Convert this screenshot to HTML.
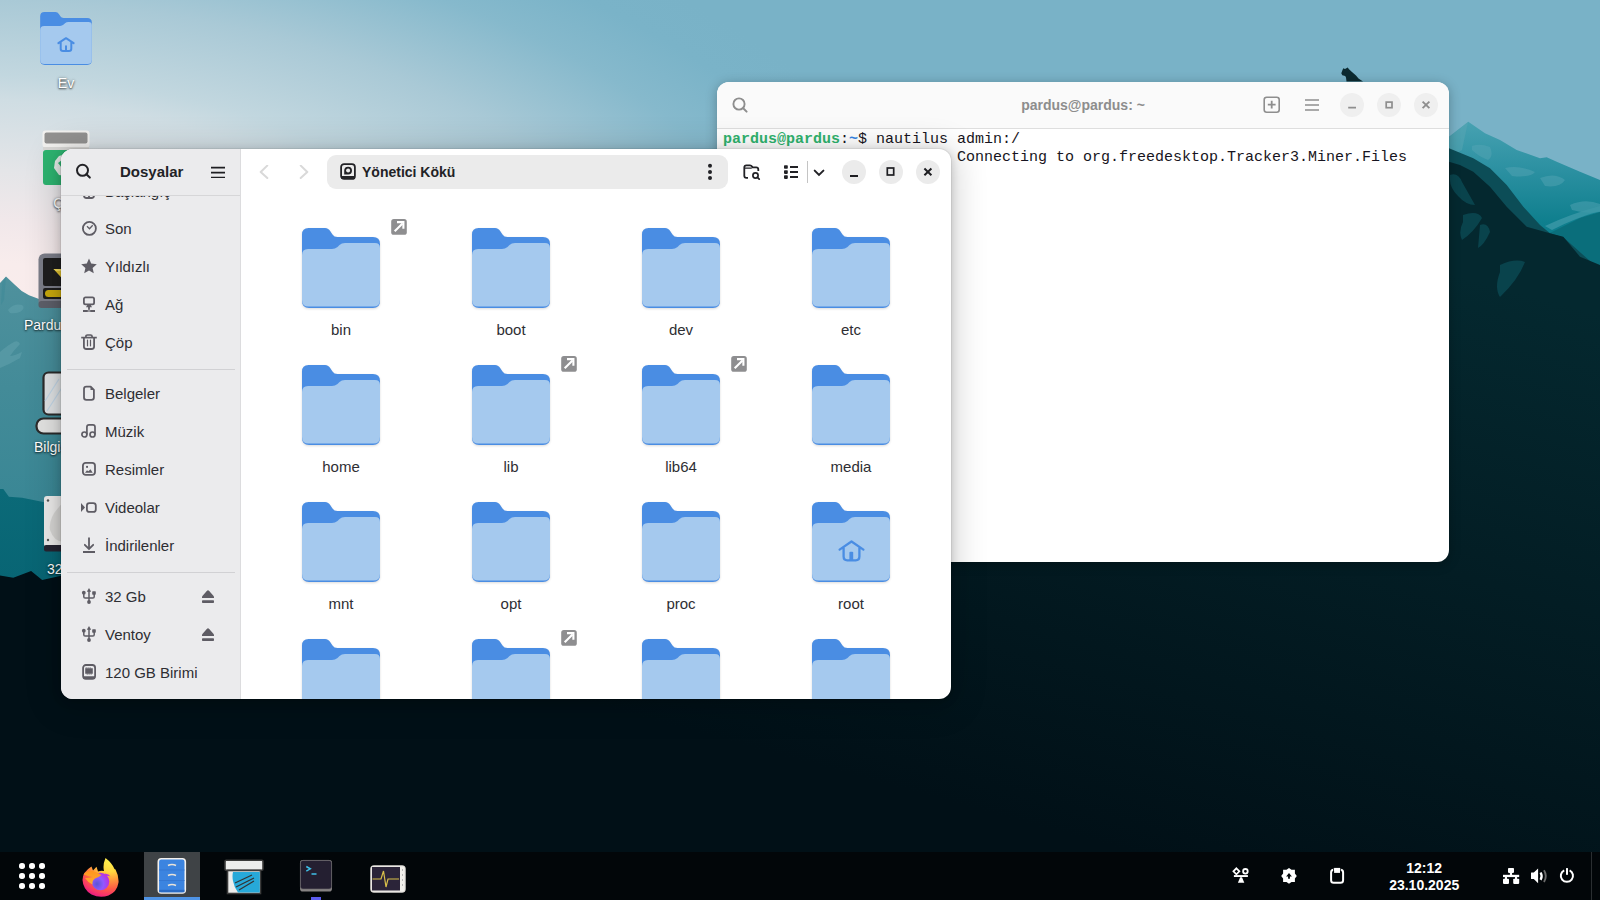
<!DOCTYPE html>
<html><head><meta charset="utf-8"><style>*{margin:0;padding:0;box-sizing:border-box}
html,body{width:1600px;height:900px;overflow:hidden;font-family:"Liberation Sans",sans-serif}
body{position:relative;background:#02121a}
.abs{position:absolute}
#wall{position:absolute;left:0;top:0;width:1600px;height:900px}
.dlbl{position:absolute;text-align:center;color:#fff;font-size:14px;line-height:18px;text-shadow:0 1px 2px rgba(0,0,0,.7),0 0 3px rgba(0,0,0,.35)}
#term{position:absolute;left:717px;top:82px;width:732px;height:480px;background:#fff;border-radius:12px;overflow:hidden;box-shadow:0 2px 12px rgba(0,0,0,.28)}
#term .hb{position:absolute;left:0;top:0;width:100%;height:47px;background:#fafafa;border-bottom:1px solid #dedede}
.ttl{left:0;top:14px;width:732px;text-align:center;font-size:14px;font-weight:bold;color:#8d8d8d;line-height:18px}
.tbtn{width:24px;height:24px;border-radius:50%;background:#efefef}
.tline{position:absolute;font-family:"Liberation Mono",monospace;font-size:15px;white-space:pre;color:#171421;line-height:18px}
.tline b{font-weight:bold}
#naut{position:absolute;left:61px;top:149px;width:890px;height:550px;background:#fff;border-radius:12px;overflow:hidden;box-shadow:0 0 0 1px rgba(0,0,0,.05),0 2px 8px 1px rgba(0,0,0,.16),0 4px 32px 6px rgba(0,0,0,.16)}
#side{position:absolute;left:0;top:0;width:180px;height:550px;background:#ebebed;border-right:1px solid #dcdcde}
#side .hb{position:absolute;left:0;top:0;width:179px;height:47px;background:#ebebed;border-bottom:1px solid #d6d6d8}
.si{position:absolute;left:44px;font-size:15px;color:#2e2e33;line-height:18px;white-space:nowrap}
.sep{position:absolute;left:6px;width:168px;height:1px;background:#d1d1d4}
.fsh{filter:drop-shadow(0 1px 1px rgba(0,0,0,.14))}
.lbl{position:absolute;width:120px;text-align:center;font-size:15px;color:#2e2e33;line-height:18px}
#bar{position:absolute;left:0;top:852px;width:1600px;height:48px;background:#020609}
.clk{color:#fff;font-size:14px;font-weight:bold;line-height:17px;text-align:center}
</style></head><body>
<svg id="wall" width="1600" height="900" viewBox="0 0 1600 900">
<defs>
<radialGradient id="sky" cx="-40" cy="344" r="1000" gradientUnits="userSpaceOnUse" gradientTransform="translate(-40 344) scale(1 0.5) translate(40 -344)">
<stop offset="0" stop-color="#fbeceb"/>
<stop offset="0.17" stop-color="#f8ecec"/>
<stop offset="0.25" stop-color="#f1e8ea"/>
<stop offset="0.35" stop-color="#e4e5e8"/>
<stop offset="0.49" stop-color="#cfdde3"/>
<stop offset="0.54" stop-color="#c2d7df"/>
<stop offset="0.69" stop-color="#a9c9d6"/>
<stop offset="0.84" stop-color="#86b9cc"/>
<stop offset="0.93" stop-color="#7ab3c8"/>
<stop offset="1" stop-color="#79b2c7"/>
</radialGradient>
<linearGradient id="dark" x1="1330" y1="240" x2="1160" y2="860" gradientUnits="userSpaceOnUse">
<stop offset="0" stop-color="#04282f"/>
<stop offset="0.45" stop-color="#031d24"/>
<stop offset="1" stop-color="#011017"/>
</linearGradient>
<linearGradient id="mtnL" x1="0" y1="275" x2="0" y2="500" gradientUnits="userSpaceOnUse">
<stop offset="0" stop-color="#4f919d"/>
<stop offset="0.5" stop-color="#438b98"/>
<stop offset="1" stop-color="#3a8795"/>
</linearGradient>
<linearGradient id="mtnL2" x1="0" y1="490" x2="0" y2="580" gradientUnits="userSpaceOnUse">
<stop offset="0" stop-color="#0b6a78"/>
<stop offset="1" stop-color="#086574"/>
</linearGradient>
<linearGradient id="mtnR" x1="0" y1="120" x2="0" y2="265" gradientUnits="userSpaceOnUse">
<stop offset="0" stop-color="#48a2b2"/>
<stop offset="0.35" stop-color="#2b90a1"/>
<stop offset="0.7" stop-color="#0f7f8e"/>
<stop offset="1" stop-color="#077685"/>
</linearGradient>
</defs>
<rect width="1600" height="900" fill="url(#sky)"/>
<!-- left mountains -->
<path d="M0 283 L6 276.5 L14.5 284.5 L21.7 291 L29 295.3 L39 299 L62 308 L200 340 L200 900 L0 900Z" fill="url(#mtnL)"/>
<path d="M2 283 L6 277 L4 300 L1 305Z" fill="#3f8a97" opacity="0.6"/><path d="M8 310 Q14 303 22 305 Q26 308 20 312 Q14 314 10 313Z M0 352 Q8 345 14 342 Q18 340 20 344 Q14 350 10 356 Q14 356 22 352 L20 358 Q10 364 0 368Z" fill="#62a2ad" opacity="0.55"/>
<path d="M0 488.9 L3.3 488.9 L8.9 496.7 L22.2 497.8 L44.4 502.2 L62 504.4 L200 520 L200 900 L0 900Z" fill="url(#mtnL2)"/>
<path d="M0 575.6 L13.3 577.8 L31.1 571.1 L42.2 580 L62 575.6 L120 590 L300 620 L300 900 L0 900Z" fill="url(#dark)"/>
<!-- right mountains -->
<path d="M1440 140 L1449 136.7 L1468.3 121.7 L1485 133.3 L1500 140 L1516.7 150 L1540 158.3 L1546.7 157.3 L1556.7 161.7 L1580 171.7 L1600 180 L1600 900 L1440 900Z" fill="url(#mtnR)"/>
<path d="M1449 137 L1468 122 L1462 150 L1449 158Z" fill="#5aa6b3" opacity="0.5"/>
<path d="M1472 146 Q1480 143 1490 147 Q1494 156 1488 160 Q1478 156 1472 150Z M1505 168 Q1520 165 1535 172 Q1530 178 1512 176Z M1540 178 Q1555 172 1565 180 Q1560 188 1545 186Z M1570 205 Q1585 198 1600 204 L1600 212 Q1585 214 1572 210Z" fill="#58a7b5" opacity="0.45"/>
<path d="M1550 233 L1580 218 L1600 212 L1600 270 L1580 256.7 L1563.3 236.7Z" fill="#0a6e7b"/>
<path d="M1545 226 Q1570 214 1600 206 L1600 211 Q1575 218 1552 230Z" fill="#3c98a8" opacity="0.8"/>
<path d="M1440 146 L1449 148.3 L1473.3 158.3 L1490 168.3 L1506.7 185 L1523.3 206.7 L1540 225 L1550 233.3 L1563 237 L1600 270 L1600 900 L1440 900Z" fill="#0c4d57"/>
<path d="M1440 160 L1449 161.7 L1460 165 L1473.3 171.7 L1490 186.7 L1506.7 206.7 L1526.7 226.7 L1550 233.3 L1563.3 236.7 L1580 256.7 L1600 265 L1600 900 L1440 900Z" fill="url(#dark)"/>
<path d="M1450 175 Q1458 172 1462 182 Q1470 196 1475 205 Q1466 205 1458 196 Q1450 188 1450 180Z M1463 215 Q1478 210 1482 218 Q1474 232 1462 240 Q1458 232 1463 222Z M1480 225 Q1488 222 1490 232 Q1484 245 1478 248Z M1500 265 Q1515 258 1525 262 Q1518 280 1500 297 Q1494 288 1500 272Z" fill="#0b4a54" opacity="0.8"/>
<!-- centre dark fill behind windows -->
<rect x="61" y="560" width="1390" height="292" fill="url(#dark)"/>
<rect x="0" y="852" width="1600" height="48" fill="#020609"/>
<path d="M1341.3 73.3 L1342.5 70 L1343.3 68.2 L1345 69 L1347.7 67.5 L1349 69.3 L1352 72 L1356 75.5 L1358.5 78.5 L1363 81.5 L1346.5 81.5 L1346 77.5 L1345.2 76 L1342.3 75.3Z" fill="#0c2a30"/>
</svg>
<svg class="abs" style="left:40px;top:12px" width="52" height="53" viewBox="0 0 78 80"><path d="M0 6.5 Q0 0 6.5 0 L23 0 Q26.5 0 28.5 3.5 L30.5 6.5 Q32 9 35.5 9 L71 9 Q78 9 78 16 L78 73 Q78 80 71 80 L7 80 Q0 80 0 73Z" fill="#4a8de3"/>
<path d="M0 27 Q0 21 6 21 L30 21 Q33 21 35.5 19 L37.5 17 Q39.5 15 43 15 L73 15 Q78 15 78 20 L78 72 Q78 78.6 71.5 78.6 L6.5 78.6 Q0 78.6 0 72Z" fill="#a5c9ee"/><path d="M27.5 47 L39 39.5 L50.5 47 M31 45.5 L31 55.5 Q31 59 34.5 59 L43.5 59 Q47 59 47 55.5 L47 45.5 M39 59 L39 51.5" stroke="#4a8de3" stroke-width="3" fill="none" stroke-linecap="round" stroke-linejoin="round"/></svg><div class="dlbl" style="left:36px;top:74px;width:60px">Ev</div><svg class="abs" style="left:42px;top:130px" width="48" height="56" viewBox="0 0 48 56">
<rect x="1" y="20" width="46" height="35" rx="3" fill="#2db470"/>
<rect x="0.5" y="0.5" width="47" height="17" rx="3" fill="#f2f1ef"/>
<rect x="2.5" y="2.5" width="43" height="11" rx="2" fill="#929190"/>
<rect x="1" y="17" width="46" height="3" fill="#d9d8d6"/>
<path d="M13 31 L17 26 L24 24 L24 46 L17 45 L12 38Z" fill="#e6ece8"/><path d="M16 33 L20 30 L20 38Z" fill="#2db470"/>
</svg><div class="dlbl" style="left:36px;top:194px;width:60px">Çöp</div><svg class="abs" style="left:38px;top:253px" width="30" height="56" viewBox="0 0 30 56">
<rect x="0.5" y="0.5" width="50" height="54" rx="6" fill="#7b7d88"/>
<rect x="0.5" y="48" width="50" height="7" rx="3" fill="#5d5f69"/>
<rect x="5" y="5" width="45" height="28" rx="2" fill="#1e1e1e"/>
<rect x="5" y="35" width="45" height="11" rx="2" fill="#1e1e1e"/>
<rect x="7" y="37" width="40" height="7" rx="3.5" fill="#c9a90c"/>
<path d="M15.5 16 L30 16 L30 32 Z" fill="#e3c430"/><path d="M15.5 16 L30 16 L30 18 L18 18Z" fill="#f3dc60"/>
</svg><div class="dlbl" style="left:14px;top:316px;width:80px;text-align:left;padding-left:10px">Pardus</div><svg class="abs" style="left:35px;top:371px" width="30" height="64" viewBox="0 0 30 64">
<rect x="8.5" y="1.5" width="40" height="42" rx="5" fill="#dfe2e4" stroke="#2b2b2b" stroke-width="2.2"/>
<path d="M10 30 L24 8 M12 40 L30 12" stroke="#c2d6e6" stroke-width="1.2"/>
<rect x="1.5" y="47.5" width="50" height="15" rx="7" fill="#e3e3e2" stroke="#2b2b2b" stroke-width="2.2"/>
</svg><div class="dlbl" style="left:24px;top:438px;width:80px;text-align:left;padding-left:10px">Bilgisayar</div><svg class="abs" style="left:44px;top:496px" width="20" height="56" viewBox="0 0 20 56">
<rect x="0" y="0" width="40" height="51" rx="3" fill="#ecebea"/>
<rect x="0" y="49" width="40" height="6.5" rx="2" fill="#272431"/>
<path d="M20 6 Q4 20 6 34 Q10 46 20 46Z" fill="#d7d6d4"/>
<circle cx="4" cy="4.5" r="1.2" fill="#555"/><circle cx="4" cy="44" r="1.2" fill="#555"/>
</svg><div class="dlbl" style="left:37px;top:560px;width:60px;text-align:left;padding-left:10px">32 Gb</div>
<div id="term">
 <div class="hb"></div>
 <svg class="abs" style="left:15px;top:15px" width="18" height="18" viewBox="0 0 18 18"><circle cx="7" cy="7" r="5.6" stroke="#8e8e8e" stroke-width="1.9" fill="none"/><path d="M11.2 11.2 L14.6 14.6" stroke="#8e8e8e" stroke-width="2" stroke-linecap="round"/></svg>
 <div class="abs ttl">pardus@pardus: ~</div>
 <svg class="abs" style="left:546px;top:14px" width="18" height="18" viewBox="0 0 18 18"><rect x="1.2" y="1.2" width="15" height="15" rx="2.5" stroke="#8e8e8e" stroke-width="1.6" fill="none"/><path d="M8.7 4.8 V12.6 M4.8 8.7 H12.6" stroke="#8e8e8e" stroke-width="1.8"/></svg>
 <svg class="abs" style="left:588px;top:17px" width="14" height="12" viewBox="0 0 14 12"><path d="M0 1 H14 M0 6 H14 M0 11 H14" stroke="#8e8e8e" stroke-width="1.5"/></svg>
 <div class="abs tbtn" style="left:623px;top:11px"></div>
 <div class="abs tbtn" style="left:660px;top:11px"></div>
 <div class="abs tbtn" style="left:697px;top:11px"></div>
 <svg class="abs" style="left:0;top:0" width="732" height="46" viewBox="0 0 732 46"><path d="M631.2 25.6 H639" stroke="#8e8e8e" stroke-width="1.8"/><rect x="669.2" y="20.1" width="5.8" height="5.6" stroke="#8e8e8e" stroke-width="1.7" fill="none"/><path d="M705.6 19.6 L712.4 26.1 M712.4 19.6 L705.6 26.1" stroke="#8e8e8e" stroke-width="1.9"/></svg>
 <div class="tline" style="left:6px;top:48.5px"><b style="color:#2fb36e">pardus@pardus</b>:<b style="color:#3584e4">~</b>$ nautilus admin:/</div>
 <div class="tline" style="left:6px;top:66.5px">                          Connecting to org.freedesktop.Tracker3.Miner.Files</div>
</div>
<div id="naut"><svg class="abs fsh" style="left:241px;top:79px" width="78" height="80" viewBox="0 0 78 80"><path d="M0 6.5 Q0 0 6.5 0 L23 0 Q26.5 0 28.5 3.5 L30.5 6.5 Q32 9 35.5 9 L71 9 Q78 9 78 16 L78 73 Q78 80 71 80 L7 80 Q0 80 0 73Z" fill="#4a8de3"/>
<path d="M0 27 Q0 21 6 21 L30 21 Q33 21 35.5 19 L37.5 17 Q39.5 15 43 15 L73 15 Q78 15 78 20 L78 72 Q78 78.6 71.5 78.6 L6.5 78.6 Q0 78.6 0 72Z" fill="#a5c9ee"/></svg><div class="lbl" style="left:220px;top:171.6px">bin</div><svg class="abs" style="left:330px;top:70px" width="16" height="16" viewBox="0 0 16 16"><rect x="0.2" y="0.1" width="15.6" height="15.7" rx="2.6" fill="#8e8e90"/><path d="M3.7 12.3 L11.5 4.5" stroke="#fff" stroke-width="2.1"/><path d="M6 3.1 H12.4 V9.7" stroke="#fff" stroke-width="2.1" fill="none"/></svg><svg class="abs fsh" style="left:411px;top:79px" width="78" height="80" viewBox="0 0 78 80"><path d="M0 6.5 Q0 0 6.5 0 L23 0 Q26.5 0 28.5 3.5 L30.5 6.5 Q32 9 35.5 9 L71 9 Q78 9 78 16 L78 73 Q78 80 71 80 L7 80 Q0 80 0 73Z" fill="#4a8de3"/>
<path d="M0 27 Q0 21 6 21 L30 21 Q33 21 35.5 19 L37.5 17 Q39.5 15 43 15 L73 15 Q78 15 78 20 L78 72 Q78 78.6 71.5 78.6 L6.5 78.6 Q0 78.6 0 72Z" fill="#a5c9ee"/></svg><div class="lbl" style="left:390px;top:171.6px">boot</div><svg class="abs fsh" style="left:581px;top:79px" width="78" height="80" viewBox="0 0 78 80"><path d="M0 6.5 Q0 0 6.5 0 L23 0 Q26.5 0 28.5 3.5 L30.5 6.5 Q32 9 35.5 9 L71 9 Q78 9 78 16 L78 73 Q78 80 71 80 L7 80 Q0 80 0 73Z" fill="#4a8de3"/>
<path d="M0 27 Q0 21 6 21 L30 21 Q33 21 35.5 19 L37.5 17 Q39.5 15 43 15 L73 15 Q78 15 78 20 L78 72 Q78 78.6 71.5 78.6 L6.5 78.6 Q0 78.6 0 72Z" fill="#a5c9ee"/></svg><div class="lbl" style="left:560px;top:171.6px">dev</div><svg class="abs fsh" style="left:751px;top:79px" width="78" height="80" viewBox="0 0 78 80"><path d="M0 6.5 Q0 0 6.5 0 L23 0 Q26.5 0 28.5 3.5 L30.5 6.5 Q32 9 35.5 9 L71 9 Q78 9 78 16 L78 73 Q78 80 71 80 L7 80 Q0 80 0 73Z" fill="#4a8de3"/>
<path d="M0 27 Q0 21 6 21 L30 21 Q33 21 35.5 19 L37.5 17 Q39.5 15 43 15 L73 15 Q78 15 78 20 L78 72 Q78 78.6 71.5 78.6 L6.5 78.6 Q0 78.6 0 72Z" fill="#a5c9ee"/></svg><div class="lbl" style="left:730px;top:171.6px">etc</div><svg class="abs fsh" style="left:241px;top:216px" width="78" height="80" viewBox="0 0 78 80"><path d="M0 6.5 Q0 0 6.5 0 L23 0 Q26.5 0 28.5 3.5 L30.5 6.5 Q32 9 35.5 9 L71 9 Q78 9 78 16 L78 73 Q78 80 71 80 L7 80 Q0 80 0 73Z" fill="#4a8de3"/>
<path d="M0 27 Q0 21 6 21 L30 21 Q33 21 35.5 19 L37.5 17 Q39.5 15 43 15 L73 15 Q78 15 78 20 L78 72 Q78 78.6 71.5 78.6 L6.5 78.6 Q0 78.6 0 72Z" fill="#a5c9ee"/></svg><div class="lbl" style="left:220px;top:308.6px">home</div><svg class="abs fsh" style="left:411px;top:216px" width="78" height="80" viewBox="0 0 78 80"><path d="M0 6.5 Q0 0 6.5 0 L23 0 Q26.5 0 28.5 3.5 L30.5 6.5 Q32 9 35.5 9 L71 9 Q78 9 78 16 L78 73 Q78 80 71 80 L7 80 Q0 80 0 73Z" fill="#4a8de3"/>
<path d="M0 27 Q0 21 6 21 L30 21 Q33 21 35.5 19 L37.5 17 Q39.5 15 43 15 L73 15 Q78 15 78 20 L78 72 Q78 78.6 71.5 78.6 L6.5 78.6 Q0 78.6 0 72Z" fill="#a5c9ee"/></svg><div class="lbl" style="left:390px;top:308.6px">lib</div><svg class="abs" style="left:500px;top:207px" width="16" height="16" viewBox="0 0 16 16"><rect x="0.2" y="0.1" width="15.6" height="15.7" rx="2.6" fill="#8e8e90"/><path d="M3.7 12.3 L11.5 4.5" stroke="#fff" stroke-width="2.1"/><path d="M6 3.1 H12.4 V9.7" stroke="#fff" stroke-width="2.1" fill="none"/></svg><svg class="abs fsh" style="left:581px;top:216px" width="78" height="80" viewBox="0 0 78 80"><path d="M0 6.5 Q0 0 6.5 0 L23 0 Q26.5 0 28.5 3.5 L30.5 6.5 Q32 9 35.5 9 L71 9 Q78 9 78 16 L78 73 Q78 80 71 80 L7 80 Q0 80 0 73Z" fill="#4a8de3"/>
<path d="M0 27 Q0 21 6 21 L30 21 Q33 21 35.5 19 L37.5 17 Q39.5 15 43 15 L73 15 Q78 15 78 20 L78 72 Q78 78.6 71.5 78.6 L6.5 78.6 Q0 78.6 0 72Z" fill="#a5c9ee"/></svg><div class="lbl" style="left:560px;top:308.6px">lib64</div><svg class="abs" style="left:670px;top:207px" width="16" height="16" viewBox="0 0 16 16"><rect x="0.2" y="0.1" width="15.6" height="15.7" rx="2.6" fill="#8e8e90"/><path d="M3.7 12.3 L11.5 4.5" stroke="#fff" stroke-width="2.1"/><path d="M6 3.1 H12.4 V9.7" stroke="#fff" stroke-width="2.1" fill="none"/></svg><svg class="abs fsh" style="left:751px;top:216px" width="78" height="80" viewBox="0 0 78 80"><path d="M0 6.5 Q0 0 6.5 0 L23 0 Q26.5 0 28.5 3.5 L30.5 6.5 Q32 9 35.5 9 L71 9 Q78 9 78 16 L78 73 Q78 80 71 80 L7 80 Q0 80 0 73Z" fill="#4a8de3"/>
<path d="M0 27 Q0 21 6 21 L30 21 Q33 21 35.5 19 L37.5 17 Q39.5 15 43 15 L73 15 Q78 15 78 20 L78 72 Q78 78.6 71.5 78.6 L6.5 78.6 Q0 78.6 0 72Z" fill="#a5c9ee"/></svg><div class="lbl" style="left:730px;top:308.6px">media</div><svg class="abs fsh" style="left:241px;top:353px" width="78" height="80" viewBox="0 0 78 80"><path d="M0 6.5 Q0 0 6.5 0 L23 0 Q26.5 0 28.5 3.5 L30.5 6.5 Q32 9 35.5 9 L71 9 Q78 9 78 16 L78 73 Q78 80 71 80 L7 80 Q0 80 0 73Z" fill="#4a8de3"/>
<path d="M0 27 Q0 21 6 21 L30 21 Q33 21 35.5 19 L37.5 17 Q39.5 15 43 15 L73 15 Q78 15 78 20 L78 72 Q78 78.6 71.5 78.6 L6.5 78.6 Q0 78.6 0 72Z" fill="#a5c9ee"/></svg><div class="lbl" style="left:220px;top:445.6px">mnt</div><svg class="abs fsh" style="left:411px;top:353px" width="78" height="80" viewBox="0 0 78 80"><path d="M0 6.5 Q0 0 6.5 0 L23 0 Q26.5 0 28.5 3.5 L30.5 6.5 Q32 9 35.5 9 L71 9 Q78 9 78 16 L78 73 Q78 80 71 80 L7 80 Q0 80 0 73Z" fill="#4a8de3"/>
<path d="M0 27 Q0 21 6 21 L30 21 Q33 21 35.5 19 L37.5 17 Q39.5 15 43 15 L73 15 Q78 15 78 20 L78 72 Q78 78.6 71.5 78.6 L6.5 78.6 Q0 78.6 0 72Z" fill="#a5c9ee"/></svg><div class="lbl" style="left:390px;top:445.6px">opt</div><svg class="abs fsh" style="left:581px;top:353px" width="78" height="80" viewBox="0 0 78 80"><path d="M0 6.5 Q0 0 6.5 0 L23 0 Q26.5 0 28.5 3.5 L30.5 6.5 Q32 9 35.5 9 L71 9 Q78 9 78 16 L78 73 Q78 80 71 80 L7 80 Q0 80 0 73Z" fill="#4a8de3"/>
<path d="M0 27 Q0 21 6 21 L30 21 Q33 21 35.5 19 L37.5 17 Q39.5 15 43 15 L73 15 Q78 15 78 20 L78 72 Q78 78.6 71.5 78.6 L6.5 78.6 Q0 78.6 0 72Z" fill="#a5c9ee"/></svg><div class="lbl" style="left:560px;top:445.6px">proc</div><svg class="abs fsh" style="left:751px;top:353px" width="78" height="80" viewBox="0 0 78 80"><path d="M0 6.5 Q0 0 6.5 0 L23 0 Q26.5 0 28.5 3.5 L30.5 6.5 Q32 9 35.5 9 L71 9 Q78 9 78 16 L78 73 Q78 80 71 80 L7 80 Q0 80 0 73Z" fill="#4a8de3"/>
<path d="M0 27 Q0 21 6 21 L30 21 Q33 21 35.5 19 L37.5 17 Q39.5 15 43 15 L73 15 Q78 15 78 20 L78 72 Q78 78.6 71.5 78.6 L6.5 78.6 Q0 78.6 0 72Z" fill="#a5c9ee"/><path d="M27.6 47.6 L39.5 39.5 L51.4 47.6 M31.6 46 V54.6 Q31.6 58.3 35.3 58.3 H43.7 Q47.4 58.3 47.4 54.6 V46" stroke="#4a8de3" stroke-width="2.3" fill="none" stroke-linecap="round" stroke-linejoin="round"/><rect x="37.4" y="49.8" width="3.8" height="9" rx="1" fill="#4a8de3"/></svg><div class="lbl" style="left:730px;top:445.6px">root</div><svg class="abs fsh" style="left:241px;top:490px" width="78" height="80" viewBox="0 0 78 80"><path d="M0 6.5 Q0 0 6.5 0 L23 0 Q26.5 0 28.5 3.5 L30.5 6.5 Q32 9 35.5 9 L71 9 Q78 9 78 16 L78 73 Q78 80 71 80 L7 80 Q0 80 0 73Z" fill="#4a8de3"/>
<path d="M0 27 Q0 21 6 21 L30 21 Q33 21 35.5 19 L37.5 17 Q39.5 15 43 15 L73 15 Q78 15 78 20 L78 72 Q78 78.6 71.5 78.6 L6.5 78.6 Q0 78.6 0 72Z" fill="#a5c9ee"/></svg><svg class="abs fsh" style="left:411px;top:490px" width="78" height="80" viewBox="0 0 78 80"><path d="M0 6.5 Q0 0 6.5 0 L23 0 Q26.5 0 28.5 3.5 L30.5 6.5 Q32 9 35.5 9 L71 9 Q78 9 78 16 L78 73 Q78 80 71 80 L7 80 Q0 80 0 73Z" fill="#4a8de3"/>
<path d="M0 27 Q0 21 6 21 L30 21 Q33 21 35.5 19 L37.5 17 Q39.5 15 43 15 L73 15 Q78 15 78 20 L78 72 Q78 78.6 71.5 78.6 L6.5 78.6 Q0 78.6 0 72Z" fill="#a5c9ee"/></svg><svg class="abs" style="left:500px;top:481px" width="16" height="16" viewBox="0 0 16 16"><rect x="0.2" y="0.1" width="15.6" height="15.7" rx="2.6" fill="#8e8e90"/><path d="M3.7 12.3 L11.5 4.5" stroke="#fff" stroke-width="2.1"/><path d="M6 3.1 H12.4 V9.7" stroke="#fff" stroke-width="2.1" fill="none"/></svg><svg class="abs fsh" style="left:581px;top:490px" width="78" height="80" viewBox="0 0 78 80"><path d="M0 6.5 Q0 0 6.5 0 L23 0 Q26.5 0 28.5 3.5 L30.5 6.5 Q32 9 35.5 9 L71 9 Q78 9 78 16 L78 73 Q78 80 71 80 L7 80 Q0 80 0 73Z" fill="#4a8de3"/>
<path d="M0 27 Q0 21 6 21 L30 21 Q33 21 35.5 19 L37.5 17 Q39.5 15 43 15 L73 15 Q78 15 78 20 L78 72 Q78 78.6 71.5 78.6 L6.5 78.6 Q0 78.6 0 72Z" fill="#a5c9ee"/></svg><svg class="abs fsh" style="left:751px;top:490px" width="78" height="80" viewBox="0 0 78 80"><path d="M0 6.5 Q0 0 6.5 0 L23 0 Q26.5 0 28.5 3.5 L30.5 6.5 Q32 9 35.5 9 L71 9 Q78 9 78 16 L78 73 Q78 80 71 80 L7 80 Q0 80 0 73Z" fill="#4a8de3"/>
<path d="M0 27 Q0 21 6 21 L30 21 Q33 21 35.5 19 L37.5 17 Q39.5 15 43 15 L73 15 Q78 15 78 20 L78 72 Q78 78.6 71.5 78.6 L6.5 78.6 Q0 78.6 0 72Z" fill="#a5c9ee"/></svg><svg class="abs" style="left:198px;top:16px" width="10" height="14" viewBox="0 0 10 14"><path d="M8.3 0.6 L1.7 7 L8.3 13.1" stroke="#d9d9d9" stroke-width="2" fill="none" stroke-linecap="round" stroke-linejoin="round"/></svg><svg class="abs" style="left:238px;top:16px" width="10" height="14" viewBox="0 0 10 14"><path d="M1.7 0.6 L8.3 7 L1.7 13.1" stroke="#d9d9d9" stroke-width="2" fill="none" stroke-linecap="round" stroke-linejoin="round"/></svg><div class="abs" style="left:266px;top:6px;width:401px;height:34px;border-radius:9px;background:#ebebeb"></div><svg class="abs" style="left:279px;top:14px" width="16" height="18" viewBox="0 0 16 18"><rect x="1.1" y="1.1" width="13.8" height="14.8" rx="3" stroke="#222226" stroke-width="1.8" fill="none"/><rect x="1.1" y="13" width="13.8" height="2.9" rx="1.2" fill="#222226"/><path d="M8.1 3.7 A3.9 3.9 0 1 1 8.1 11.5 H4.2 V7.6 A3.9 3.9 0 0 1 8.1 3.7Z" fill="#222226"/><circle cx="8.1" cy="7.6" r="2" fill="#ebebeb"/></svg><div class="abs" style="left:301px;top:13.5px;font-size:14px;font-weight:bold;color:#222226;line-height:18px">Yönetici Kökü</div><svg class="abs" style="left:646px;top:14px;height:18px" width="6" height="16" viewBox="0 0 6 18"><circle cx="3" cy="2.8" r="2" fill="#222226"/><circle cx="3" cy="8.9" r="2" fill="#222226"/><circle cx="3" cy="15" r="2" fill="#222226"/></svg><svg class="abs" style="left:682px;top:15px" width="18" height="17" viewBox="0 0 18 17"><path d="M5 13.8 H3.4 Q1.3 13.8 1.3 11.7 V3.5 Q1.3 1.3 3.4 1.3 H7 Q8.3 1.3 9 2.4 L9.6 3.3 H13.2 Q15.3 3.3 15.3 5.4 V7" stroke="#222226" stroke-width="1.8" fill="none"/><path d="M1.3 4.1 H8.8" stroke="#222226" stroke-width="1.2"/><circle cx="12.5" cy="11.5" r="2.6" stroke="#222226" stroke-width="1.7" fill="none"/><path d="M14.4 13.4 L16.2 15.1" stroke="#222226" stroke-width="1.8" stroke-linecap="round"/></svg><svg class="abs" style="left:722px;top:15px" width="16" height="15" viewBox="0 0 16 15"><rect x="1" y="1.2" width="3.8" height="3.6" rx="0.8" fill="#222226"/><rect x="1" y="6.3" width="3.8" height="3.6" rx="0.8" fill="#222226"/><rect x="1" y="11.3" width="3.8" height="3.6" rx="0.8" fill="#222226"/><path d="M7 3 H15 M7 8 H15 M7 13 H15" stroke="#222226" stroke-width="1.8"/></svg><div class="abs" style="left:746px;top:12px;width:1px;height:22px;background:#c4c4c4"></div><svg class="abs" style="left:752px;top:20px" width="12" height="8" viewBox="0 0 12 8"><path d="M1.7 1.6 L6 5.9 L10.4 1.6" stroke="#222226" stroke-width="2" fill="none" stroke-linecap="round"/></svg><div class="abs" style="left:781px;top:11px;width:24px;height:24px;border-radius:50%;background:#ebebeb"></div><div class="abs" style="left:818px;top:11px;width:24px;height:24px;border-radius:50%;background:#ebebeb"></div><div class="abs" style="left:855px;top:11px;width:24px;height:24px;border-radius:50%;background:#ebebeb"></div><svg class="abs" style="left:781px;top:11px" width="100" height="24" viewBox="0 0 100 24"><path d="M8 25.5 H16" stroke="#1e1e22" stroke-width="2" transform="translate(0 -9.5)"/><rect x="45.3" y="8" width="6.4" height="7" stroke="#1e1e22" stroke-width="1.7" fill="none"/><path d="M82.4 8.5 L89.4 15.2 M89.4 8.5 L82.4 15.2" stroke="#1e1e22" stroke-width="2"/></svg><div id="side"><div class="si" style="top:34.2px">Başlangıç</div><svg class="abs" style="left:20px;top:34.4px" width="16" height="16" viewBox="0 0 16 16"><path d="M1 7 L8 1.5 L15 7 M3 6 V12.5 Q3 15 5.5 15 H10.5 Q13 15 13 12.5 V6 M8 15 V10.5" stroke="#5e5c64" stroke-width="1.8" fill="none" stroke-linejoin="round"/></svg><div class="si" style="top:71.0px">Son</div><svg class="abs" style="left:20px;top:71.2px" width="16" height="16" viewBox="0 0 16 16"><circle cx="8.4" cy="8.4" r="6.5" stroke="#5e5c64" stroke-width="1.8" fill="none"/><path d="M6 6.3 L8.5 8.7 L11.7 5.2" stroke="#5e5c64" stroke-width="1.3" fill="none"/></svg><div class="si" style="top:109.0px">Yıldızlı</div><svg class="abs" style="left:20px;top:109.2px" width="16" height="16" viewBox="0 0 16 16"><path d="M8 0.6 L10.2 5.6 L15.8 6.2 L11.6 9.9 L12.8 15.3 L8 12.6 L3.2 15.3 L4.4 9.9 L0.2 6.2 L5.8 5.6Z" fill="#5e5c64"/></svg><div class="si" style="top:147.0px">Ağ</div><svg class="abs" style="left:20px;top:147.2px" width="16" height="16" viewBox="0 0 16 16"><rect x="2.9" y="1.4" width="10.2" height="6.9" rx="1.6" stroke="#5e5c64" stroke-width="1.8" fill="none"/><path d="M5 11.2 L6.2 9 H9.8 L11 11.2Z" fill="#5e5c64"/><path d="M8 10 V13.3 M2 15 H6.6 M9.4 15 H14" stroke="#5e5c64" stroke-width="1.8"/><circle cx="8" cy="15" r="1.3" stroke="#5e5c64" stroke-width="1" fill="none"/></svg><div class="si" style="top:185.0px">Çöp</div><svg class="abs" style="left:20px;top:185.2px" width="16" height="16" viewBox="0 0 16 16"><path d="M0.2 3.6 H15.8" stroke="#5e5c64" stroke-width="1.7"/><path d="M4.9 3.4 V2.6 Q4.9 1 6.5 1 H9.5 Q11.1 1 11.1 2.6 V3.4" stroke="#5e5c64" stroke-width="1.7" fill="none"/><path d="M2.9 3.6 V12.5 Q2.9 15 5.4 15 H10.6 Q13.1 15 13.1 12.5 V3.6" stroke="#5e5c64" stroke-width="1.8" fill="none"/><path d="M6.5 6.2 V11.8 M9.5 6.2 V11.8" stroke="#5e5c64" stroke-width="1.2" stroke-linecap="round"/></svg><div class="si" style="top:236.0px">Belgeler</div><svg class="abs" style="left:20px;top:236.2px" width="16" height="16" viewBox="0 0 16 16"><path d="M5.3 1.6 H9.7 L12.9 4.8 V12.6 Q12.9 14.9 10.6 14.9 H5.3 Q3 14.9 3 12.6 V3.9 Q3 1.6 5.3 1.6Z" stroke="#5e5c64" stroke-width="1.8" fill="none" stroke-linejoin="round"/><path d="M9.5 1.8 V4.9 H12.7Z" fill="#5e5c64"/></svg><div class="si" style="top:274.0px">Müzik</div><svg class="abs" style="left:20px;top:274.2px" width="16" height="16" viewBox="0 0 16 16"><circle cx="3.4" cy="11.5" r="2.5" stroke="#5e5c64" stroke-width="1.7" fill="none"/><circle cx="11.5" cy="11.5" r="2.5" stroke="#5e5c64" stroke-width="1.7" fill="none"/><path d="M5.9 11.5 V4 Q5.9 1.8 8 1.8 H11.9 Q14 1.8 14 4 V11.5" stroke="#5e5c64" stroke-width="1.7" fill="none"/></svg><div class="si" style="top:312.0px">Resimler</div><svg class="abs" style="left:20px;top:312.2px" width="16" height="16" viewBox="0 0 16 16"><rect x="1.9" y="1.9" width="12.1" height="12" rx="2.8" stroke="#5e5c64" stroke-width="1.8" fill="none"/><rect x="5.1" y="4.9" width="1.9" height="1.9" fill="#5e5c64"/><path d="M4 11.8 L6 9.2 L7.3 10.2 L9.5 8.2 L11.7 11.8Z" fill="#5e5c64"/></svg><div class="si" style="top:350.0px">Videolar</div><svg class="abs" style="left:20px;top:350.2px" width="16" height="16" viewBox="0 0 16 16"><path d="M0 4 L4 8.5 L0 13Z" fill="#5e5c64"/><rect x="5.9" y="4.1" width="8.9" height="8.8" rx="2.5" stroke="#5e5c64" stroke-width="1.8" fill="none"/></svg><div class="si" style="top:388.0px">İndirilenler</div><svg class="abs" style="left:20px;top:388.2px" width="16" height="16" viewBox="0 0 16 16"><path d="M8 0.5 V12" stroke="#5e5c64" stroke-width="1.8"/><path d="M3.8 7.8 L8 12 L12.2 7.8" stroke="#5e5c64" stroke-width="1.8" fill="none" stroke-linecap="round"/><path d="M2 15 H14" stroke="#5e5c64" stroke-width="1.8"/></svg><div class="si" style="top:439.0px">32 Gb</div><svg class="abs" style="left:20px;top:439.2px" width="16" height="16" viewBox="0 0 16 16"><path d="M8 3 V13" stroke="#5e5c64" stroke-width="1.5"/><path d="M8 0 L10.2 3.8 H5.8Z" fill="#5e5c64"/><circle cx="8" cy="14" r="1.9" fill="#5e5c64"/><path d="M2.8 5 V8.7 Q2.8 10 4.1 10 H11.9 Q13.2 10 13.2 8.7 V6" stroke="#5e5c64" stroke-width="1.5" fill="none"/><circle cx="2.8" cy="4.7" r="1.9" fill="#5e5c64"/><rect x="11.2" y="3.3" width="3.6" height="3.4" rx="0.6" fill="#5e5c64"/></svg><div class="si" style="top:477.0px">Ventoy</div><svg class="abs" style="left:20px;top:477.2px" width="16" height="16" viewBox="0 0 16 16"><path d="M8 3 V13" stroke="#5e5c64" stroke-width="1.5"/><path d="M8 0 L10.2 3.8 H5.8Z" fill="#5e5c64"/><circle cx="8" cy="14" r="1.9" fill="#5e5c64"/><path d="M2.8 5 V8.7 Q2.8 10 4.1 10 H11.9 Q13.2 10 13.2 8.7 V6" stroke="#5e5c64" stroke-width="1.5" fill="none"/><circle cx="2.8" cy="4.7" r="1.9" fill="#5e5c64"/><rect x="11.2" y="3.3" width="3.6" height="3.4" rx="0.6" fill="#5e5c64"/></svg><div class="si" style="top:515.0px">120 GB Birimi</div><svg class="abs" style="left:20px;top:515.2px" width="16" height="16" viewBox="0 0 16 16"><rect x="2.1" y="1" width="12" height="13.8" rx="2.8" stroke="#5e5c64" stroke-width="1.8" fill="none"/><rect x="2.1" y="12.3" width="12" height="2.6" rx="1" fill="#5e5c64"/><path d="M4.2 4.3 H11.8 V9.7 H4.2Z" fill="#5e5c64"/><path d="M5.2 3.3 V4.5 M7.1 3.3 V4.5 M9.1 3.3 V4.5 M6.2 9.5 V10.7 M8.1 9.5 V10.7 M10.1 9.5 V10.7" stroke="#5e5c64" stroke-width="0.9"/></svg><svg class="abs" style="left:140px;top:440.8px" width="14" height="14" viewBox="0 0 14 14"><path d="M7 0.3 Q7.6 0.3 8 0.8 L12.4 5.8 Q13 6.6 13 7.3 V8 H1 V7.3 Q1 6.6 1.6 5.8 L6 0.8 Q6.4 0.3 7 0.3Z" fill="#5e5c64"/><rect x="1" y="10.2" width="12" height="2.8" rx="0.8" fill="#5e5c64"/></svg><svg class="abs" style="left:140px;top:478.8px" width="14" height="14" viewBox="0 0 14 14"><path d="M7 0.3 Q7.6 0.3 8 0.8 L12.4 5.8 Q13 6.6 13 7.3 V8 H1 V7.3 Q1 6.6 1.6 5.8 L6 0.8 Q6.4 0.3 7 0.3Z" fill="#5e5c64"/><rect x="1" y="10.2" width="12" height="2.8" rx="0.8" fill="#5e5c64"/></svg><div class="sep" style="top:220px"></div><div class="sep" style="top:423px"></div><div class="hb"><svg class="abs" style="left:14px;top:14px" width="18" height="18" viewBox="0 0 18 18"><circle cx="7.5" cy="7.3" r="5.5" stroke="#222226" stroke-width="2" fill="none"/><path d="M11.4 11.3 L14.8 14.6" stroke="#222226" stroke-width="2.1" stroke-linecap="round"/></svg><div class="abs" style="left:59px;top:14.2px;font-size:15px;font-weight:bold;color:#222226;line-height:18px">Dosyalar</div><svg class="abs" style="left:150px;top:17px" width="14" height="12" viewBox="0 0 14 12"><path d="M0 1.6 H14 M0 6.6 H14 M0 11.6 H14" stroke="#1e1e22" stroke-width="1.8"/></svg></div></div></div>
<div id="bar"><div class="abs" style="left:19.3px;top:11.3px;width:5.4px;height:5.4px;border-radius:50%;background:#fff"></div><div class="abs" style="left:19.3px;top:21.3px;width:5.4px;height:5.4px;border-radius:50%;background:#fff"></div><div class="abs" style="left:19.3px;top:31.3px;width:5.4px;height:5.4px;border-radius:50%;background:#fff"></div><div class="abs" style="left:29.3px;top:11.3px;width:5.4px;height:5.4px;border-radius:50%;background:#fff"></div><div class="abs" style="left:29.3px;top:21.3px;width:5.4px;height:5.4px;border-radius:50%;background:#fff"></div><div class="abs" style="left:29.3px;top:31.3px;width:5.4px;height:5.4px;border-radius:50%;background:#fff"></div><div class="abs" style="left:39.3px;top:11.3px;width:5.4px;height:5.4px;border-radius:50%;background:#fff"></div><div class="abs" style="left:39.3px;top:21.3px;width:5.4px;height:5.4px;border-radius:50%;background:#fff"></div><div class="abs" style="left:39.3px;top:31.3px;width:5.4px;height:5.4px;border-radius:50%;background:#fff"></div><svg class="abs" style="left:80px;top:2px" width="40" height="44" viewBox="0 0 40 44">
<defs><radialGradient id="ffo" cx="30" cy="6" r="40" gradientUnits="userSpaceOnUse"><stop offset="0" stop-color="#fff44f"/><stop offset="0.3" stop-color="#ffd640"/><stop offset="0.5" stop-color="#ff9a3c"/><stop offset="0.72" stop-color="#ff5b45"/><stop offset="0.9" stop-color="#f5306f"/><stop offset="1" stop-color="#e31587"/></radialGradient>
<radialGradient id="ffp" cx="17" cy="30" r="12" gradientUnits="userSpaceOnUse"><stop offset="0" stop-color="#5a55d4"/><stop offset="0.55" stop-color="#9059ff"/><stop offset="1" stop-color="#b833e1"/></radialGradient>
<linearGradient id="ffh" x1="0" y1="10" x2="0" y2="30" gradientUnits="userSpaceOnUse"><stop offset="0" stop-color="#ff8a16"/><stop offset="1" stop-color="#ffa930"/></linearGradient></defs>
<path d="M11.5 12.5 L13 16.5 L16.5 12.8 L18 17.5 Q21 16.2 24 17 Q22.5 11 25.5 4 Q32 9 34.5 15 L35.5 15.5 Q39 22 38.5 28.5 Q37 38 28.5 41.5 Q20 44.5 11.5 40.5 Q3 35.5 2.5 26 Q2.5 18 11.5 12.5Z" fill="url(#ffo)"/>
<circle cx="20.5" cy="27.5" r="8.8" fill="url(#ffp)"/>
<path d="M25 19.5 Q29 20 30.5 22.5 Q28 21.5 25.5 22Z" fill="#b833e1"/>
<path d="M3.5 20.5 Q7 16 12.5 17 Q18 18.5 21.5 21 Q18.5 23.5 15 24.5 Q12 26.5 12.5 30.5 Q7.5 28 5 24Q10 24 13 23 Q8 22 3.5 20.5Z" fill="url(#ffh)"/>
</svg><div class="abs" style="left:144px;top:0;width:56px;height:48px;background:#3f4346"></div><div class="abs" style="left:144px;top:45px;width:56px;height:3px;background:#4f94e6"></div><svg class="abs" style="left:157px;top:6px" width="30" height="37" viewBox="0 0 30 37">
<rect x="1.3" y="0.8" width="27" height="34.2" rx="3" fill="#3b84e0" stroke="#f4f1ed" stroke-width="1.6"/>
<rect x="2.1" y="31.8" width="25.4" height="2.5" fill="#2a6bc4"/>
<path d="M2.1 12 H27.5 M2.1 22.5 H27.5" stroke="#3477d2" stroke-width="1"/>
<path d="M11 7.5 Q15 5.5 19 7.5 M11 17.5 Q15 15.5 19 17.5 M11 27.5 Q15 25.5 19 27.5" stroke="#e8e2d8" stroke-width="1.6" fill="none"/>
</svg><svg class="abs" style="left:224px;top:7px" width="40" height="36" viewBox="0 0 40 36">
<rect x="1" y="1.3" width="38" height="10" rx="1.2" fill="#ecedec" stroke="#3b3b3b" stroke-width="1.6"/>
<rect x="3.5" y="11.5" width="33" height="23" fill="#ecedec" stroke="#3b3b3b" stroke-width="1.6"/>
<path d="M9 13 H35.8 V33.6 H14 Q10 28 9 22 Q8 17 9 13Z" fill="#27a9d9"/>
<path d="M11 24 L28 16 M12 28 L30 19 M15 31 L30 22" stroke="#333" stroke-width="1.3"/>
</svg><svg class="abs" style="left:299px;top:7px" width="34" height="34" viewBox="0 0 34 34">
<rect x="1" y="1" width="32" height="31.5" rx="2.8" fill="#858282"/>
<rect x="1.4" y="1.4" width="31.2" height="28.6" rx="2.5" fill="#241f31" stroke="#6e6b6f" stroke-width="0.6"/>
<path d="M7.3 7.5 L11.3 9.8 L7.3 12.1" stroke="#3fc0e8" stroke-width="1.5" fill="none"/>
<path d="M12.5 15 H17.5" stroke="#3fc0e8" stroke-width="1.5"/>
</svg><div class="abs" style="left:311px;top:45px;width:10px;height:3px;background:#5c5cf0"></div><svg class="abs" style="left:370px;top:13px" width="36" height="28" viewBox="0 0 36 28">
<rect x="0.8" y="0.8" width="34.4" height="26.4" rx="2.5" fill="#f2f0ec" stroke="#d6d3cf" stroke-width="1"/>
<rect x="2" y="2" width="28" height="23.5" fill="#2b2439"/>
<path d="M2.5 14 H11 L13.5 6 L16 22 L18 14 H29" stroke="#d9c04a" stroke-width="1.2" fill="none"/>
<path d="M32.5 4 V6 M32.5 9 V11 M32.5 14 V16 M32.5 19 V21" stroke="#aaa" stroke-width="0.8"/>
</svg><svg class="abs" style="left:0;top:0" width="1600" height="48" viewBox="0 852 1600 48">
<path d="M1236.4 868.3 L1239.4 871.3 L1236.4 874.3 L1233.4 871.3Z" stroke="#fff" stroke-width="1.7" fill="none"/>
<circle cx="1245.4" cy="871.3" r="2.3" stroke="#fff" stroke-width="1.8" fill="none"/>
<rect x="1233.9" y="875.1" width="14" height="1.9" fill="#fff"/>
<path d="M1240.2 877.2 H1242 L1244.3 882.8 H1237.9Z" fill="#fff"/>
<path d="M1289 867.9 L1291.5 869.8 H1294.9 V873.5 L1296.8 876 L1294.9 878.5 V881.9 H1291.5 L1289 883.8 L1286.5 881.9 H1283.1 V878.5 L1281.2 876 L1283.1 873.5 V869.8 H1286.5Z" fill="#fff"/>
<path d="M1289 872.9 L1291.9 876.6 H1289.9 V878.8 H1288.1 V876.6 H1286.1Z" fill="#020609"/>
<rect x="1331.1" y="869.8" width="12" height="13" rx="2.6" stroke="#fff" stroke-width="2" fill="none"/>
<path d="M1334.1 867.9 H1340 V872.9 H1334.1Z" fill="#fff"/>
<path d="M1333.5 869 V871" stroke="#020609" stroke-width="0.8"/><path d="M1340.6 869 V871" stroke="#020609" stroke-width="0.8"/>
<rect x="1508" y="867.9" width="6" height="5" rx="0.8" fill="#fff"/>
<rect x="1509.9" y="872.5" width="2.2" height="3" fill="#fff"/>
<rect x="1503" y="874.8" width="16.2" height="2.3" fill="#fff"/>
<rect x="1504.9" y="876.8" width="2.1" height="2.3" fill="#fff"/><rect x="1515" y="876.8" width="2.1" height="2.3" fill="#fff"/>
<rect x="1503" y="878.8" width="6" height="5.1" rx="0.8" fill="#fff"/><rect x="1513.2" y="878.8" width="6" height="5.1" rx="0.8" fill="#fff"/>
<path d="M1531 872.8 Q1531 872.5 1531.5 872.5 H1533.8 L1538.1 868.5 V883.2 L1533.8 878.9 H1531.5 Q1531 878.9 1531 878.4Z" fill="#fff"/>
<path d="M1540.6 872.5 Q1542.8 876.2 1540.6 879.9" stroke="#fff" stroke-width="2.3" fill="none"/>
<path d="M1544 870.3 Q1547.6 876.2 1544 882" stroke="#6b6b6b" stroke-width="1.9" fill="none"/>
<path d="M1564.2 870.3 A6.1 6.1 0 1 0 1569.6 870.3" stroke="#fff" stroke-width="2" fill="none"/>
<rect x="1566" y="868.1" width="2" height="6.7" fill="#fff"/>
</svg><div class="abs clk" style="left:1384.2px;top:8px;width:80px">12:12<br>23.10.2025</div><div class="abs" style="left:1591px;top:0;width:1px;height:48px;background:#2a2e31"></div></div>
</body></html>
